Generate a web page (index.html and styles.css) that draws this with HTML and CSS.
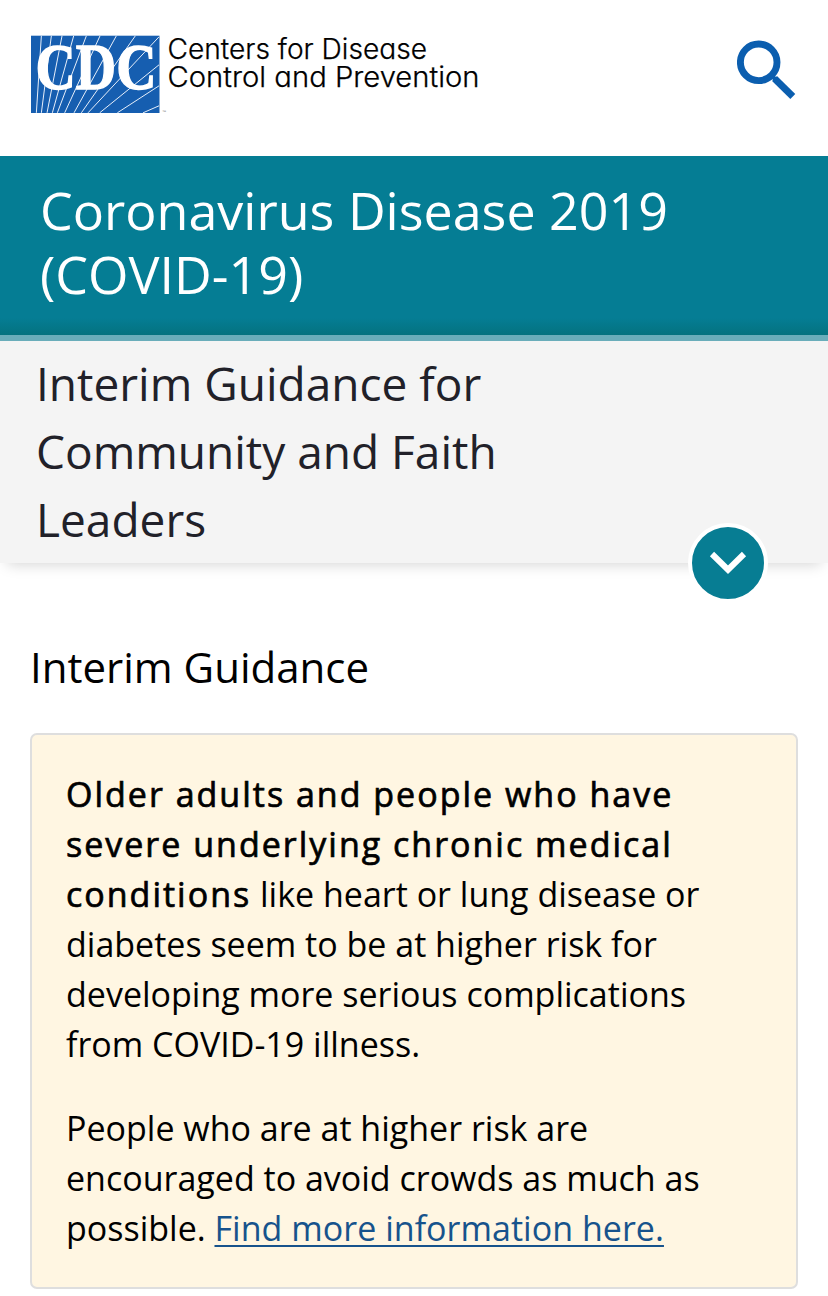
FILE: index.html
```html
<!DOCTYPE html>
<html lang="en">
<head>
<meta charset="utf-8">
<title>Interim Guidance for Community and Faith Leaders</title>
<link rel="stylesheet" href="styles.css">
</head>
<body>
<header class="site-header">
  <svg class="logo" width="460" height="90" viewBox="0 0 460 90" role="img" aria-label="CDC">
    <rect x="1" y="5.7" width="128.5" height="77.3" fill="#165eb0"/>
    <g transform="translate(-10.3 -5.2) scale(.33333)">
      <g class="rays">
        <path d="M65 33 50 264M95 33 65 264M127 33 82 264M162 33 98 264M200 33 113 264M241 33 135 264M290 33 163 264M347 33 185 264M418 36 205 264M418 120 240 264M418 183 293 264M418 243 370 264"/>
      </g>
    </g>
    <text class="logo-mark" x="5.5" y="59.3" textLength="121" lengthAdjust="spacingAndGlyphs">CDC</text>
    <text class="logo-tm" x="132" y="83">™</text>
    <text class="logo-name" x="137.5" y="29" textLength="259.5" lengthAdjust="spacingAndGlyphs">Centers for Disease</text>
    <text class="logo-name" x="137.5" y="57" textLength="312" lengthAdjust="spacingAndGlyphs">Control and Prevention</text>
  </svg>
  <svg class="search" width="60" height="60" viewBox="0 0 60 60" fill="none" stroke="#0b5eaf">
    <circle cx="21.7" cy="22.3" r="18.3" stroke-width="6.9"/>
    <path d="M37.5 38.5 55.8 56.6" stroke-width="7"/>
    <path d="M34 35 39 40" stroke-width="4"/>
  </svg>
</header>
<div class="topic">Coronavirus Disease 2019<br>(COVID-19)</div>
<div class="page-title">
  <h1>Interim Guidance for<br>Community and Faith<br>Leaders</h1>
  <button class="toggle" aria-label="Expand">
    <svg width="72" height="72" viewBox="0 0 72 72" fill="none" stroke="#fff" stroke-width="6"><path d="M20 27 36 42.7 52 27"/></svg>
  </button>
</div>
<main class="content">
  <h2>Interim Guidance</h2>
  <section class="callout">
    <p><strong>Older adults and people who have<br>severe underlying chronic medical<br>conditions</strong> like heart or lung disease or<br>diabetes seem to be at higher risk for<br>developing more serious complications<br>from COVID-19 illness.</p>
    <p>People who are at higher risk are<br>encouraged to avoid crowds as much as<br>possible. <a href="#">Find more information here.</a></p>
  </section>
</main>
</body>
</html>
```
FILE: styles.css
```css
* { box-sizing: border-box; }
body {
  margin: 0;
  background: #fff;
  color: #000;
  font-family: "Open Sans", "Noto Sans", sans-serif;
  overflow-x: hidden;
}
.site-header {
  height: 156px;
  padding: 30px 31px 0 30px;
  display: flex;
  justify-content: space-between;
}
.logo { overflow: visible; }
.rays { stroke: #e7effa; stroke-width: 3; fill: none; }
.logo-mark { font: bold 66px "Liberation Serif", serif; fill: #fff; stroke: #fff; stroke-width: 1.4px; }
.logo-tm { font: 4px "Liberation Sans", sans-serif; fill: #777; }
.logo-name { font: 300 28px Inter, "Liberation Sans", sans-serif; font-feature-settings: "cv11"; fill: #000; stroke: #000; stroke-width: .25px; }
.search { margin-top: 10px; }
.topic {
  height: 185px;
  padding: 22px 40px 0;
  border-bottom: 6px solid #69adba;
  background: linear-gradient(#057d94 0, #057d94 162px, #04727f 179px);
  color: #fff;
  font-size: 52px;
  line-height: 64px;
  white-space: nowrap;
}
.page-title {
  position: relative;
  height: 222px;
  padding: 8px 36px 0;
  background: #f4f4f4;
  box-shadow: 0 8px 14px -7px rgba(0,0,0,.18);
}
h1, h2, p { margin: 0; font-weight: 400; white-space: nowrap; }
h1 { font-size: 46px; line-height: 68px; color: #212129; }
.toggle {
  position: absolute;
  right: 60px;
  bottom: -40px;
  width: 80px;
  height: 80px;
  padding: 0;
  border: 4px solid #fff;
  border-radius: 50%;
  background: #077d93;
}
.toggle svg { display: block; }
.content { padding: 74px 30px 0; }
h2 { font-size: 42px; line-height: 60px; }
.callout {
  margin-top: 36px;
  height: 556px;
  padding: 34px 34px 0;
  border: 2px solid #dedede;
  border-radius: 7px;
  background: #fff6e2;
  font-size: 34px;
  line-height: 50px;
}
.callout p + p { margin-top: 34px; }
.callout strong { font-weight: 400; -webkit-text-stroke: .7px #000; letter-spacing: 2px; }
.callout a { color: #17538c; letter-spacing: .03px; text-decoration-thickness: 2px; text-underline-offset: 4px; }
```
